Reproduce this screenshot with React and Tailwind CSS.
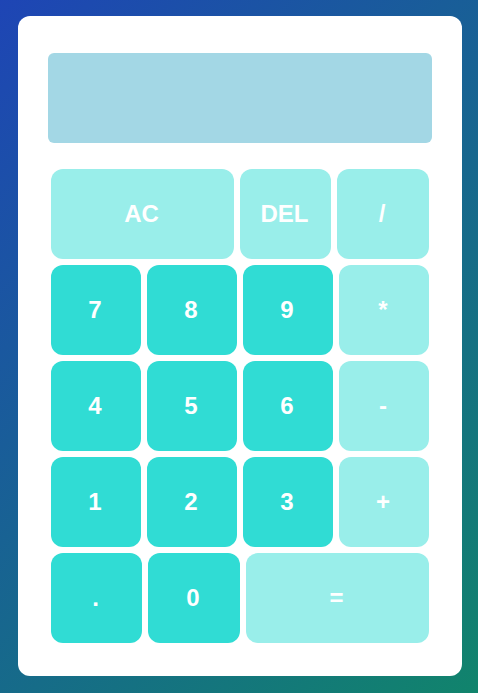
const light = 'bg-[#99eeea]';
const dark = 'bg-[#30dcd4]';

const rows = [
    [
        { label: 'AC', w: 'w-[183px]', c: light },
        { label: 'DEL', w: 'w-[91px]', c: light },
        { label: '/', w: 'w-[92px]', c: light },
    ],
    [
        { label: '7', w: 'w-[90px]', c: dark },
        { label: '8', w: 'w-[90px]', c: dark },
        { label: '9', w: 'w-[90px]', c: dark },
        { label: '*', w: 'w-[90px]', c: light },
    ],
    [
        { label: '4', w: 'w-[90px]', c: dark },
        { label: '5', w: 'w-[90px]', c: dark },
        { label: '6', w: 'w-[90px]', c: dark },
        { label: '-', w: 'w-[90px]', c: light },
    ],
    [
        { label: '1', w: 'w-[90px]', c: dark },
        { label: '2', w: 'w-[90px]', c: dark },
        { label: '3', w: 'w-[90px]', c: dark },
        { label: '+', w: 'w-[90px]', c: light },
    ],
    [
        { label: '.', w: 'w-[91px]', c: dark },
        { label: '0', w: 'w-[92px]', c: dark },
        { label: '=', w: 'w-[183px]', c: light },
    ],
];

const App = () => {
    return (
        <div className="min-h-screen pt-[16px] pl-[18px] bg-[linear-gradient(135deg,#1e45b5,#11846c)] font-['Liberation_Sans',Arial,sans-serif]">
            <div className="w-[444px] h-[660px] bg-white rounded-xl pt-[37px] px-[30px]">
                <div className="h-[90px] bg-[#a3d7e5] rounded-md"></div>
                <div className="mt-[26px] ml-[3px] flex flex-col gap-[6px]">
                    {rows.map((row, i) => (
                        <div key={i} className="flex gap-[6px]">
                            {row.map((b) => (
                                <button
                                    key={b.label}
                                    className={`${b.w} ${b.c} h-[90px] pr-[2px] rounded-xl text-white font-bold text-[24px] flex items-center justify-center`}
                                >
                                    {b.label}
                                </button>
                            ))}
                        </div>
                    ))}
                </div>
            </div>
        </div>
    );
};

export default App;
